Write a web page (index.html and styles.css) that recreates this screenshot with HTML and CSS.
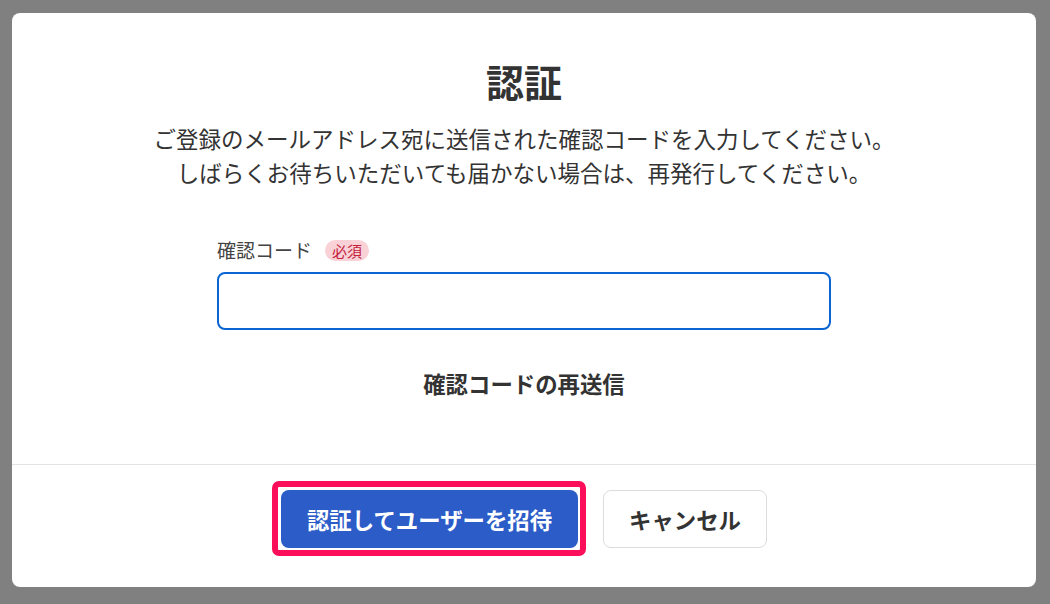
FILE: index.html
```html
<!DOCTYPE html>
<html lang="ja">
<head>
  <meta charset="UTF-8" />
  <meta name="viewport" content="width=device-width, initial-scale=1.0"/>
  <title>認証</title>
  <link rel="stylesheet" href="styles.css">
</head>
<body>

<div class="modal">
  <div class="modal-body">
    <h1 class="modal-title">認証</h1>
    <p class="modal-desc">
      ご登録のメールアドレス宛に送信された確認コードを入力してください。<br>
      しばらくお待ちいただいても届かない場合は、再発行してください。
    </p>

    <div class="field">
      <label class="field-label" for="code">確認コード <span class="required">必須</span></label>
      <input type="text" id="code" class="field-input" />
    </div>

    <a href="#" class="resend">確認コードの再送信</a>
  </div>

  <div class="modal-footer">
    <button class="btn btn-primary highlight">認証してユーザーを招待</button>
    <button class="btn btn-secondary">キャンセル</button>
  </div>
</div>

</body>
</html>
```

FILE: styles.css
```css
body {
  font-family: "Noto Sans CJK JP", "Noto Sans", sans-serif;
  background: #808080;
  margin: 0;
  padding: 13px 14px 17px 12px;
  color: #333;
}
.modal {
  background: white;
  border-radius: 8px;
  height: 574px;
  display: flex;
  flex-direction: column;
}
.modal-body {
  padding: 43px 20px 0;
  display: flex;
  flex-direction: column;
  align-items: center;
  height: 452px;
  flex-shrink: 0;
  box-sizing: border-box;
  border-bottom: 1px solid #e3e3e3;
}
.modal-title {
  font-size: 38px;
  line-height: 49px;
  font-weight: bold;
  margin: 0;
}
.modal-desc {
  font-size: 22.5px;
  line-height: 34px;
  text-align: center;
  margin: 16px 0 0;
}
.field {
  width: 614px;
  margin-top: 48px;
}
.field-label {
  display: flex;
  align-items: center;
  gap: 13px;
  font-size: 19px;
  line-height: 26px;
  color: #444;
}
.required {
  background: #f9d2d8;
  color: #c4213d;
  font-size: 15px;
  line-height: 21px;
  padding: 0 7px;
  border-radius: 11px;
}
.field-input {
  display: block;
  width: 100%;
  height: 58px;
  box-sizing: border-box;
  margin-top: 9px;
  border: 2px solid #0a64d4;
  border-radius: 8px;
  outline: none;
  font-size: 20px;
  padding: 0 14px;
}
.resend {
  margin-top: 37px;
  font-size: 22.4px;
  line-height: 32px;
  font-weight: bold;
  color: #333;
  text-decoration: none;
}
.modal-footer {
  display: flex;
  justify-content: center;
  align-items: center;
  gap: 25px;
  padding: 25px 0 0;
}
.btn {
  font-family: inherit;
  font-size: 22.4px;
  line-height: 32px;
  font-weight: bold;
  border-radius: 8px;
  cursor: pointer;
}
.btn-primary {
  background: #2b5cc8;
  color: white;
  border: none;
  padding: 13px 20px;
  width: 297px;
}
.btn-secondary {
  background: white;
  color: #333;
  border: 1px solid #dcdcdc;
  padding: 12px 20px;
  width: 164px;
}
/* pink frame drawn around the main action */
.highlight {
  position: relative;
}
.highlight::after {
  content: "";
  position: absolute;
  top: -9px;
  left: -9px;
  right: -8px;
  bottom: -8px;
  border: 6px solid #fb0f5a;
  border-radius: 7px;
}
```
